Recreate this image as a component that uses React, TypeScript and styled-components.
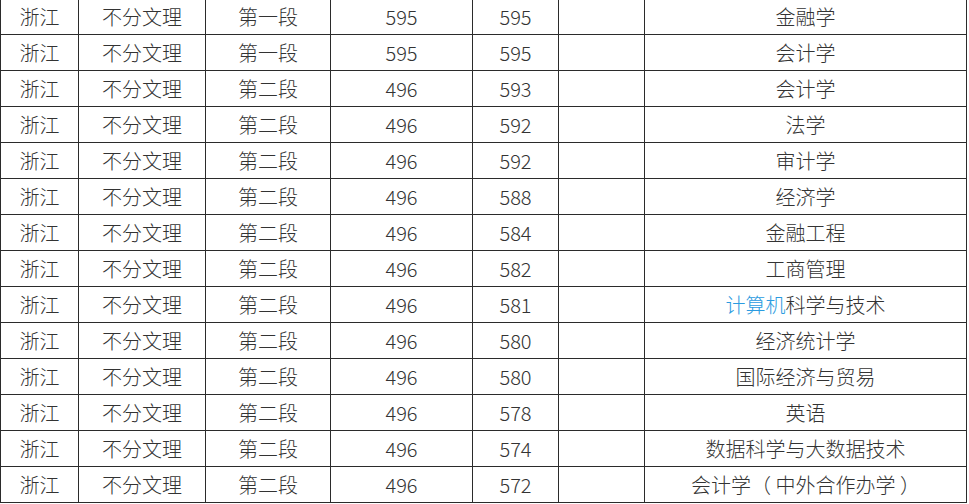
import React from 'react';
import styled, { createGlobalStyle } from 'styled-components';

const rows: [string, string, string, string, string, React.ReactNode][] = [
  ['浙江', '不分文理', '第一段', '595', '595', '金融学'],
  ['浙江', '不分文理', '第一段', '595', '595', '会计学'],
  ['浙江', '不分文理', '第二段', '496', '593', '会计学'],
  ['浙江', '不分文理', '第二段', '496', '592', '法学'],
  ['浙江', '不分文理', '第二段', '496', '592', '审计学'],
  ['浙江', '不分文理', '第二段', '496', '588', '经济学'],
  ['浙江', '不分文理', '第二段', '496', '584', '金融工程'],
  ['浙江', '不分文理', '第二段', '496', '582', '工商管理'],
  ['浙江', '不分文理', '第二段', '496', '581', null],
  ['浙江', '不分文理', '第二段', '496', '580', '经济统计学'],
  ['浙江', '不分文理', '第二段', '496', '580', '国际经济与贸易'],
  ['浙江', '不分文理', '第二段', '496', '578', '英语'],
  ['浙江', '不分文理', '第二段', '496', '574', '数据科学与大数据技术'],
  ['浙江', '不分文理', '第二段', '496', '572', '会计学（ 中外合作办学 ）'],
];

const widths = [78, 127, 125, 142, 86, 86, 322];

const App: React.FC = () => {
  return (
    <Page>
      <GlobalStyle />
      <Table>
        <colgroup>
          {widths.map((w, i) => (
            <col key={i} style={{ width: w }} />
          ))}
        </colgroup>
        <tbody>
          {rows.map((r, i) => (
            <tr key={i}>
              <Cell>{r[0]}</Cell>
              <Cell>{r[1]}</Cell>
              <Cell>{r[2]}</Cell>
              <Cell>{r[3]}</Cell>
              <Cell>{r[4]}</Cell>
              <Cell />
              <Cell>
                {r[5] ?? (
                  <>
                    <Link>计算机</Link>科学与技术
                  </>
                )}
              </Cell>
            </tr>
          ))}
        </tbody>
      </Table>
    </Page>
  );
};

const GlobalStyle = createGlobalStyle`
  html, body {
    margin: 0;
    padding: 0;
    background: #fff;
    overflow: hidden;
  }
`;

const Page = styled.div`
  width: 969px;
  height: 504px;
  overflow: hidden;
  background: #fff;
`;

const Table = styled.table`
  margin-top: -2px;
  width: 967px;
  table-layout: fixed;
  border-collapse: collapse;
  font-family: 'Microsoft YaHei', 'Noto Sans CJK SC', 'Noto Sans', sans-serif;
  font-size: 20px;
  font-weight: 300;
  color: #333;
`;

const Cell = styled.td`
  height: 35px;
  padding: 0;
  border: 1px solid #2b2b2b;
  text-align: center;
  vertical-align: middle;
  line-height: 24px;
  white-space: nowrap;
`;

const Link = styled.span`
  color: #2b9be0;
`;

export default App;
